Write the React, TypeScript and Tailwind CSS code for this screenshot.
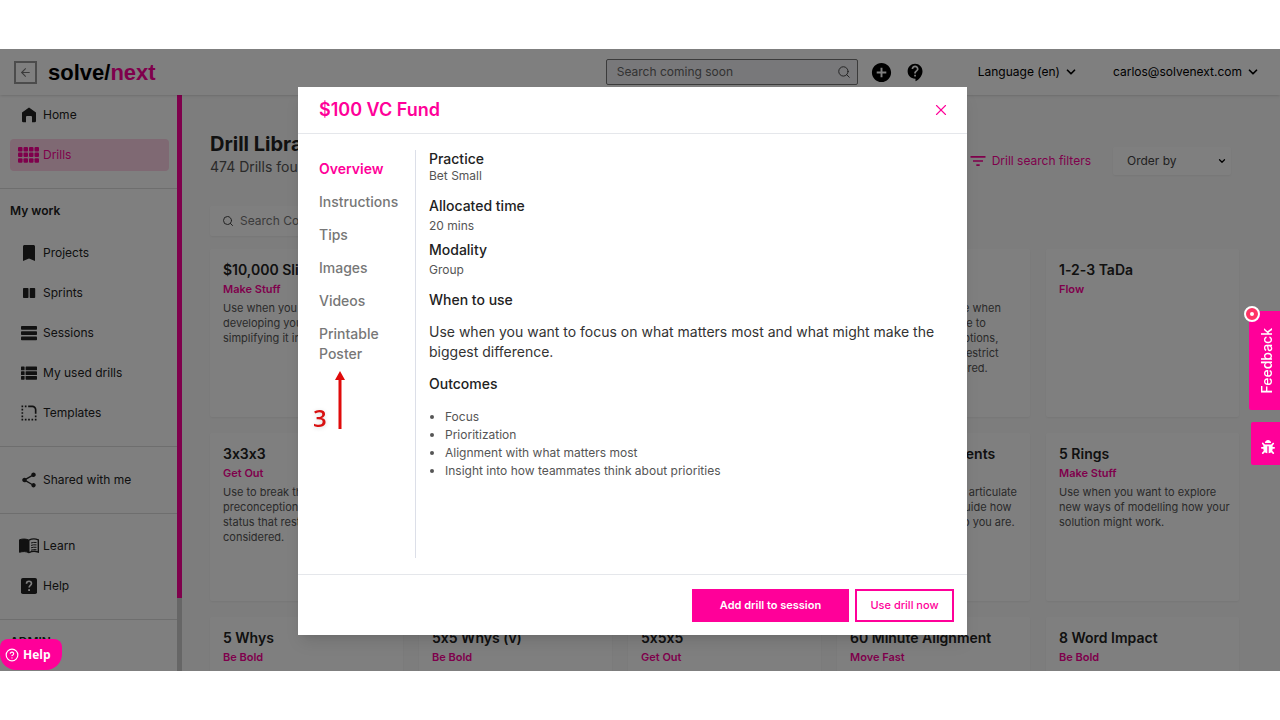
import React from 'react';
import { FaBug } from 'react-icons/fa';
import {
  MdAddCircle,
  MdContactSupport,
  MdFilterList,
  MdRoundedCorner,
  MdShare,
} from 'react-icons/md';
import { ArrowLeft, ChevronDown, CircleHelp, Search, X } from 'lucide-react';

interface Drill {
  title?: string;
  practice?: string;
  description?: string;
}

interface NavItemProps {
  icon: React.ReactNode;
  label: string;
  active?: boolean;
}

const drills: Drill[] = [
  {
    title: '$10,000 Slide',
    practice: 'Make Stuff',
    description: 'Use when you want to start\ndeveloping your idea and\nsimplifying it into a story.',
  },
  {},
  {},
  {
    description:
      'Use to break a rut. Use when\nyou need a wider range to\nbreak some preconceptions,\nand the statuses that restrict\nwhat could be considered.',
  },
  { title: '1-2-3 TaDa', practice: 'Flow' },
  {
    title: '3x3x3',
    practice: 'Get Out',
    description: 'Use to break through the\npreconceptions and the\nstatus that restrict what is\nconsidered.',
  },
  {},
  {},
  {
    title: '5 Minute Agreements',
    description:
      'Use when you want to articulate\nthe principles which guide how\nyou work, live and who you are.',
  },
  {
    title: '5 Rings',
    practice: 'Make Stuff',
    description: 'Use when you want to explore\nnew ways of modelling how your\nsolution might work.',
  },
  { title: '5 Whys', practice: 'Be Bold' },
  { title: '5x5 Whys (v)', practice: 'Be Bold' },
  { title: '5x5x5', practice: 'Get Out' },
  { title: '60 Minute Alignment', practice: 'Move Fast' },
  { title: '8 Word Impact', practice: 'Be Bold' },
];

const tabs = ['Overview', 'Instructions', 'Tips', 'Images', 'Videos', 'Printable Poster'];

const outcomes = [
  'Focus',
  'Prioritization',
  'Alignment with what matters most',
  'Insight into how teammates think about priorities',
];

const HomeIcon = () => (
  <svg viewBox="0 0 16 16" className="size-4" fill="currentColor">
    <path d="M8 .5 15 5.6V14a1.3 1.3 0 0 1-1.3 1.3H11V10a1 1 0 0 0-1-1H6a1 1 0 0 0-1 1v5.3H2.3A1.3 1.3 0 0 1 1 14V5.6z" />
  </svg>
);

const DrillsIcon = () => (
  <svg viewBox="0 0 21 16" className="h-4 w-[21px]" fill="currentColor">
    {[0, 5.6, 11.2].map((y) =>
      [0, 5.5, 11, 16.5].map((x) => (
        <rect key={`${x}-${y}`} x={x} y={y} width="4.5" height="4.5" rx="1" />
      ))
    )}
  </svg>
);

const BookmarkIcon = () => (
  <svg viewBox="0 0 16 16" className="size-4" fill="currentColor">
    <path d="M2 1.5C2 .7 2.700 0 3.500 0h9c.8 0 1.500.7 1.500 1.500V16l-6-2.600L2 16z" />
  </svg>
);

const SprintsIcon = () => (
  <svg viewBox="0 0 16 16" className="size-4" fill="currentColor">
    <rect x="2" y="3" width="5.5" height="10" rx="0.8" />
    <rect x="8.7" y="3" width="5.5" height="10" rx="0.8" />
  </svg>
);

const SessionsIcon = () => (
  <svg viewBox="0 0 16 16" className="size-4" fill="currentColor">
    <rect y="1" width="16" height="3.8" rx="0.8" />
    <rect y="6.2" width="16" height="3.8" rx="0.8" />
    <rect y="11.4" width="16" height="3.8" rx="0.8" />
  </svg>
);

const ListIcon = () => (
  <svg viewBox="0 0 16 16" className="size-4" fill="currentColor">
    {[1.5, 6.2, 10.9].map((y) => (
      <g key={y}>
        <rect y={y} width="3.6" height="3.8" rx="0.6" />
        <rect x="4.6" y={y} width="11.4" height="3.8" rx="0.6" />
      </g>
    ))}
  </svg>
);

const BookIcon = () => (
  <svg viewBox="0 0 20 16" className="h-4 w-5" fill="none" stroke="currentColor">
    <path d="M10 2.200C7.500.8 3.500.6.5 1.800v12.500c3-1.100 7-1 9.500.6z" fill="currentColor" strokeWidth="1" />
    <path d="M10 2.200c2.500-1.400 6.500-1.500 9.300-.4v12.300c-2.800-1-6.800-.9-9.300.6" strokeWidth="1.4" />
    <path
      d="M12 5q2.500-.9 5.500-.5M12 7.400q2.500-.9 5.500-.5M12 9.800q2.500-.9 5.500-.5M12 12.200q2.500-.9 5.500-.5"
      strokeWidth="1"
    />
  </svg>
);

const HelpSquareIcon = () => (
  <svg viewBox="0 0 16 16" className="size-4">
    <rect width="16" height="16" rx="1.8" fill="currentColor" />
    <path
      d="M5.500 5.700C5.500 4.200 6.600 3.200 8 3.200s2.500 1 2.500 2.300c0 1.800-2.400 2-2.400 4.100"
      fill="none"
      stroke="white"
      strokeWidth="1.6"
    />
    <rect x="7.2" y="11.2" width="1.8" height="1.8" fill="white" />
  </svg>
);

const NavItem: React.FC<NavItemProps> = ({ icon, label, active }) => (
  <a
    href="#"
    className={
      active
        ? 'flex h-8 items-center gap-1 rounded bg-[#ffd2e6] pl-2 text-xs text-[#ff0099]'
        : 'flex h-8 items-center gap-1 rounded pl-2 text-xs text-[#222]'
    }
  >
    <span className="flex w-[21px] justify-center">{icon}</span>
    {label}
  </a>
);

const Header = () => (
  <header className="relative z-10 flex h-[46px] shrink-0 items-center bg-white pr-5 pl-3.5 shadow-sm">
    <button
      aria-label="Back"
      className="flex size-[23px] items-center justify-center border-2 border-[#999] text-[#777]"
    >
      <ArrowLeft size={13} />
    </button>
    <span className="ml-[11px] font-['Liberation_Sans_Narrow','Liberation_Sans',sans-serif] text-[22px] font-bold text-black">
      solve/<span className="text-[#ff0099]">next</span>
    </span>
    <div className="ml-auto flex h-[26px] w-[252px] items-center rounded-xs border border-[#777] bg-[#f0f0f4] pr-1.5 pl-2.5">
      <input
        aria-label="Search"
        placeholder="Search coming soon"
        className="min-w-0 flex-1 bg-transparent text-xs placeholder:text-[#666]"
      />
      <Search size={14} strokeWidth={1.5} className="text-[#333]" />
    </div>
    <button aria-label="Add" className="ml-3">
      <MdAddCircle size={23} />
    </button>
    <button aria-label="Support" className="ml-3">
      <MdContactSupport size={21} />
    </button>
    <button className="ml-[52px] flex items-center gap-1 text-xs">
      Language (en)
      <ChevronDown size={14} strokeWidth={3} />
    </button>
    <button className="ml-[35px] flex items-center gap-1 text-xs">
      carlos@solvenext.com
      <ChevronDown size={14} strokeWidth={3} />
    </button>
  </header>
);

const Sidebar = () => (
  <aside className="flex w-[182px] shrink-0 bg-white">
    <nav className="min-w-0 flex-1 overflow-hidden pt-1">
      <div className="flex flex-col gap-2 border-b border-[#ddd] pr-2 pb-[17px] pl-2.5">
        <NavItem icon={<HomeIcon />} label="Home" />
        <NavItem icon={<DrillsIcon />} label="Drills" active />
      </div>
      <h2 className="mt-3 mb-4 pl-2.5 text-xs leading-5 font-semibold text-[#222]">My work</h2>
      <div className="flex flex-col gap-2 border-b border-[#ddd] pr-2 pb-[17px] pl-2.5">
        <NavItem icon={<BookmarkIcon />} label="Projects" />
        <NavItem icon={<SprintsIcon />} label="Sprints" />
        <NavItem icon={<SessionsIcon />} label="Sessions" />
        <NavItem icon={<ListIcon />} label="My used drills" />
        <NavItem icon={<MdRoundedCorner size={20} />} label="Templates" />
      </div>
      <div className="border-b border-[#ddd] py-[17px] pr-2 pl-2.5">
        <NavItem icon={<MdShare size={18} />} label="Shared with me" />
      </div>
      <div className="flex flex-col gap-2 border-b border-[#ddd] pt-4 pr-2 pb-[17px] pl-2.5">
        <NavItem icon={<BookIcon />} label="Learn" />
        <NavItem icon={<HelpSquareIcon />} label="Help" />
      </div>
      <h2 className="mt-3 pl-2.5 text-xs leading-5 font-semibold text-[#222]">ADMIN</h2>
    </nav>
    <div className="flex w-[5px] flex-col bg-[#ccc]">
      <div className="h-[503px] bg-[#ff0099]" />
    </div>
  </aside>
);

const DrillCard: React.FC<{ drill: Drill }> = ({ drill }) => (
  <article className="h-[168px] overflow-hidden rounded-xs bg-white px-[13px] pt-[11px] shadow-xs">
    <h3 className="h-5 text-sm leading-5 font-semibold whitespace-nowrap text-[#222]">
      {drill.title}
    </h3>
    <p className="h-[18px] text-[11px] leading-[18px] font-semibold text-[#ff0099]">
      {drill.practice}
    </p>
    <p className="mt-[3px] text-[11px] leading-[15px] whitespace-pre text-[#555]">
      {drill.description}
    </p>
  </article>
);

const DrillLibrary = () => (
  <main className="min-w-0 flex-1 overflow-hidden bg-[#fafafa] pt-9 pr-[41px] pl-7">
    <div className="flex items-center">
      <div>
        <h1 className="text-xl leading-[26px] font-bold text-[#222]">Drill Library</h1>
        <p className="text-sm leading-5 text-[#555]">474 Drills found</p>
      </div>
      <button className="mt-3.5 ml-auto flex items-center gap-1 text-xs text-[#ff0099]">
        <MdFilterList size={20} />
        Drill search filters
      </button>
      <div className="relative mt-3.5 mr-2 ml-[22px]">
        <select
          aria-label="Order by"
          className="block h-7 w-[118px] appearance-none rounded-xs bg-white pl-3.5 text-xs text-[#444] shadow-xs"
        >
          <option>Order by</option>
        </select>
        <ChevronDown size={10} strokeWidth={3} className="absolute top-[9px] right-1" />
      </div>
    </div>
    <div className="mt-[29px] flex h-[30px] w-[402px] items-center gap-1.5 rounded-xs bg-white pl-3 shadow-xs">
      <Search size={12} className="text-[#444]" />
      <input
        aria-label="Search Content"
        placeholder="Search Content"
        className="min-w-0 flex-1 bg-transparent text-xs placeholder:text-[#777]"
      />
    </div>
    <div className="mt-[13px] grid grid-cols-5 gap-4">
      {drills.map((drill, i) => (
        <DrillCard key={i} drill={drill} />
      ))}
    </div>
  </main>
);

const DrillDialog = () => (
  <section
    role="dialog"
    aria-label="$100 VC Fund"
    className="relative flex h-[548px] w-[669px] flex-col bg-white shadow-lg"
  >
    <header className="flex h-[47px] shrink-0 items-center justify-between border-b border-[#e5e7eb] pr-[17px] pl-[21px]">
      <h2 className="text-lg font-semibold text-[#ff0099]">$100 VC Fund</h2>
      <button aria-label="Close" className="text-[#ff0099]">
        <X size={18} strokeWidth={1.5} />
      </button>
    </header>

    <div className="flex min-h-0 flex-1 py-4 pl-[21px]">
      <nav className="flex w-[97px] shrink-0 flex-col gap-[13px] border-r border-[#dcdfe8] pt-[9px] pr-3 text-sm leading-5 font-medium text-[#777]">
        {tabs.map((tab, i) => (
          <a key={tab} href="#" className={i === 0 ? 'leading-5 font-semibold text-[#ff0099]' : 'leading-5'}>
            {tab}
          </a>
        ))}
      </nav>
      <div className="flex-1 pl-[13px] text-xs leading-4 text-[#555]">
        <h3 className="text-sm leading-[18px] font-medium text-[#222]">Practice</h3>
        <p>Bet Small</p>
        <h3 className="mt-3 text-sm leading-5 font-medium text-[#222]">Allocated time</h3>
        <p className="leading-5">20 mins</p>
        <h3 className="mt-1 text-sm leading-5 font-medium text-[#222]">Modality</h3>
        <p className="leading-5">Group</p>
        <h3 className="mt-2.5 text-sm leading-5 font-medium text-[#222]">When to use</h3>
        <p className="mt-3 pr-4 text-sm leading-5 text-[#333]">
          Use when you want to focus on what matters most and what might make the biggest
          difference.
        </p>
        <h3 className="mt-3 text-sm leading-5 font-medium text-[#222]">Outcomes</h3>
        <ul className="mt-3.5 list-disc pl-4 leading-[18px]">
          {outcomes.map((outcome) => (
            <li key={outcome}>{outcome}</li>
          ))}
        </ul>
      </div>
    </div>

    <footer className="flex h-[61px] shrink-0 items-center justify-end gap-1.5 border-t border-[#e5e7eb] pr-[13px]">
      <button className="h-[33px] w-[157px] bg-[#ff0099] text-[11px] font-semibold text-white">
        Add drill to session
      </button>
      <button className="h-[33px] w-[99px] border-2 border-[#ff0099] text-[11px] font-medium text-[#ff0099]">
        Use drill now
      </button>
    </footer>

    {/* Step marker pointing at the poster tab */}
    <div className="absolute top-[284px] left-[15px] flex items-end gap-2">
      <span className="font-['Open_Sans',sans-serif] text-2xl leading-[22px] font-semibold text-[#d81010] drop-shadow-sm">
        3
      </span>
      <svg viewBox="0 0 10 58" className="h-[58px] w-2.5" fill="#e00b0b">
        <path d="M5 0 10 9H6.500V58h-3V9H0z" />
      </svg>
    </div>
  </section>
);

const App: React.FC = () => {
  return (
    <div className="h-screen bg-white py-[49px] font-[Inter,sans-serif] [font-variant-ligatures:no-contextual]">
      <div className="relative flex h-full flex-col overflow-hidden">
        <Header />
        <div className="flex min-h-0 flex-1">
          <Sidebar />
          <DrillLibrary />
        </div>

        <div className="absolute inset-0 z-20 flex items-start justify-center bg-black/50 pt-[38px] pr-[15px]">
          <DrillDialog />
        </div>

        <button className="absolute bottom-[1px] left-0 z-30 flex h-[31px] w-[62px] items-center gap-1 rounded-tl-lg rounded-tr-lg rounded-br-2xl rounded-bl-2xl bg-[#ff0099] pl-[5px] font-['Open_Sans',sans-serif] text-xs font-bold text-white">
          <CircleHelp size={14} />
          Help
        </button>
        <div className="absolute top-[262px] right-0 z-30 flex flex-col items-end gap-3">
          <button className="relative flex h-[99px] w-[31px] items-center justify-center rounded-l-xs bg-[#ff0099] pl-1 text-sm font-medium text-white">
            <span className="rotate-180 [writing-mode:vertical-rl]">Feedback</span>
            <span className="absolute -top-[5px] -left-[5px] flex size-4 items-center justify-center rounded-full border-2 border-white bg-[#ff3366]">
              <span className="size-1 rounded-full bg-white" />
            </span>
          </button>
          <button
            aria-label="Report a bug"
            className="flex h-[43px] w-[29px] items-center justify-center rounded-l-xs bg-[#ff0099] pt-1.5 pl-1 text-white"
          >
            <FaBug size={14} />
          </button>
        </div>
      </div>
    </div>
  );
};

export default App;
